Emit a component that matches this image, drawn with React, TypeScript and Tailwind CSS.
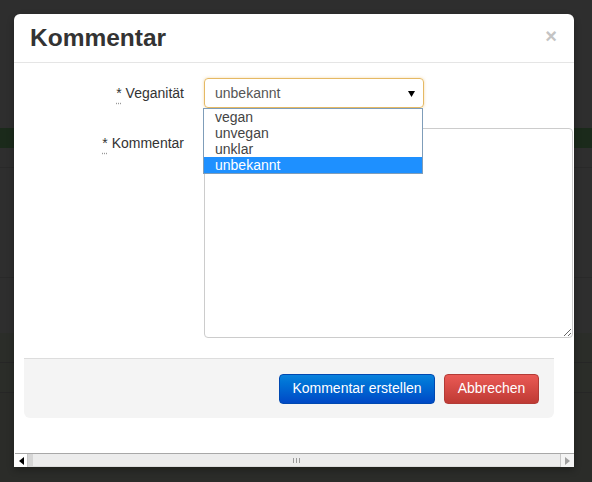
const options = ['vegan', 'unvegan', 'unklar', 'unbekannt'];

function Background() {
  return (
    <div className="flex flex-col w-[592px] h-[482px] bg-[#2e2e2e]">
      <div className="h-[128px]" />
      <div className="h-[20px] bg-[#1b2a1b]" />
      <div className="h-[20px] border-b border-[#292929]" />
      <div className="h-[110px] border-b border-[#292929]" />
      <div className="h-[55px]" />
      <div className="h-[30px] bg-[#2b2d29] border-b border-[#262626]" />
      <div className="h-[30px] bg-[#2b2d29] border-b border-[#262626]" />
      <div className="flex-1 bg-[#2b2c29]" />
    </div>
  );
}

function Label({ text }: { text: string }) {
  return (
    <div className="w-[160px] shrink-0 pt-[5px] text-right text-[14px] leading-[20px] text-[#333]">
      <abbr title="Pflichtfeld" className="underline decoration-dotted decoration-[#999] underline-offset-[5px]">
        *
      </abbr>{' '}
      {text}
    </div>
  );
}

function Scrollbar() {
  return (
    <div className="flex h-[14px] shrink-0 border-t border-[#a8a8a8] bg-[#e4e4e4] ml-px">
      <div className="w-[13px] bg-white flex items-center justify-center border-r border-[#c8c8c8]">
        <svg width="5" height="8" viewBox="0 0 5 8">
          <path d="M5 0 L0 4 L5 8 Z" fill="#000" />
        </svg>
      </div>
      <div className="flex-1 flex items-center justify-center bg-[#ececec] border-l-[5px] border-[#d6d6d6] border-b border-b-[#dcdcdc]">
        <div className="flex gap-[2px]">
          <div className="w-px h-[5px] bg-[#9a9a9a]" />
          <div className="w-px h-[5px] bg-[#9a9a9a]" />
          <div className="w-px h-[5px] bg-[#9a9a9a]" />
        </div>
      </div>
      <div className="w-[14px] bg-[#f4f4f4] flex items-center justify-center border-l border-[#c8c8c8]">
        <svg width="5" height="8" viewBox="0 0 5 8">
          <path d="M0 0 L5 4 L0 8 Z" fill="#a0a0a0" />
        </svg>
      </div>
    </div>
  );
}

export default function App() {
  return (
    <div className="relative w-[592px] h-[482px] overflow-hidden" style={{ fontFamily: '"Liberation Sans", Arial, sans-serif' }}>
      <Background />

      <div className="absolute left-[14px] top-[14px] w-[560px] h-[453px] bg-white rounded-t-[6px] overflow-hidden flex flex-col shadow-[0_3px_7px_rgba(0,0,0,0.3)]">
        <div className="h-[49px] shrink-0 flex items-center justify-between pl-[16px] pr-[17px] border-b border-[#e5e5e5]">
          <h3 className="text-[24.5px] font-bold text-[#333] leading-[30px]">Kommentar</h3>
          <span className="text-[20px] font-bold leading-[20px] text-[#c4c4c4] -mt-[5px]">×</span>
        </div>

        <div className="flex-1 pl-[10px] pt-[15px] overflow-hidden">
          <div className="relative">
            <div className="flex gap-[20px]">
              <Label text="Veganität" />
              <div className="relative w-[220px] h-[30px] border border-[#e5b964] rounded-[4px] flex items-center pl-[10px] text-[14px] text-[#555] shadow-[0_0_3px_rgba(232,180,80,0.5)]">
                unbekannt
                <svg className="absolute right-[8px] top-[12px]" width="7" height="6" viewBox="0 0 7 6">
                  <path d="M0 0 L7 0 L3.5 6 Z" fill="#000" />
                </svg>
              </div>
            </div>

            <div className="flex gap-[20px] mt-[20px]">
              <Label text="Kommentar" />
              <textarea className="block w-[369px] h-[210px] shrink-0 border border-[#ccc] rounded-[4px] resize outline-none" />
            </div>

            <div className="absolute left-[179px] top-[30px] w-[220px] bg-white border border-[#7f9db9] flex flex-col text-[14px] leading-[16px] text-[#444]">
              {options.map((o) => (
                <div
                  key={o}
                  className={o === 'unbekannt' ? 'pl-[11px] bg-[#1e90ff] text-white' : 'pl-[11px]'}
                >
                  {o}
                </div>
              ))}
            </div>
          </div>

          <div className="mt-[20px] w-[530px] h-[60px] bg-[#f4f4f4] border-t border-[#ddd] rounded-b-[6px] flex items-center justify-end gap-[9px] pr-[15px]">
            <button className="h-[30px] w-[156px] rounded-[4px] text-[14px] text-white border border-[#0048b0] bg-gradient-to-b from-[#0a82dc] to-[#0048c6]">
              Kommentar erstellen
            </button>
            <button className="h-[30px] w-[95px] rounded-[4px] text-[14px] text-white border border-[#b33b36] bg-gradient-to-b from-[#ea5a55] to-[#bf3a34]">
              Abbrechen
            </button>
          </div>
        </div>

        <Scrollbar />
      </div>
    </div>
  );
}
